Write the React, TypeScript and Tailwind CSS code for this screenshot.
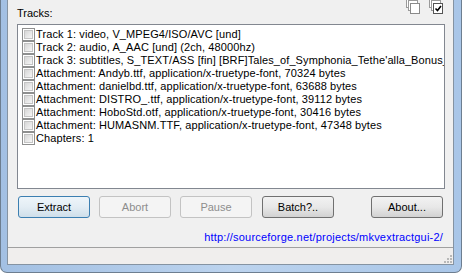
import React from "react";

const rows = [
  "Track 1: video, V_MPEG4/ISO/AVC [und]",
  "Track 2: audio, A_AAC [und]  (2ch, 48000hz)",
  "Track 3: subtitles, S_TEXT/ASS [fin] [BRF]Tales_of_Symphonia_Tethe'alla_Bonus_-_01_[720p][FIN].ass",
  "Attachment: Andyb.ttf, application/x-truetype-font, 70324 bytes",
  "Attachment: danielbd.ttf, application/x-truetype-font, 63688 bytes",
  "Attachment: DISTRO_.ttf, application/x-truetype-font, 39112 bytes",
  "Attachment: HoboStd.otf, application/x-truetype-font, 30416 bytes",
  "Attachment: HUMASNM.TTF, application/x-truetype-font, 47348 bytes",
  "Chapters: 1",
];

function StackIcon({ checked }: { checked?: boolean }) {
  return (
    <svg width="15" height="16" viewBox="0 0 15 16">
      <rect x="0.5" y="-2.5" width="9" height="10" fill="#fff" stroke="#9a9a9a" />
      <rect x="2.5" y="0.5" width="9" height="10" fill="#fff" stroke="#9a9a9a" />
      <rect
        x="4.5"
        y="3.5"
        width="9"
        height="10"
        fill="#fff"
        stroke={checked ? "#555" : "#8a8a8a"}
      />
      {checked && (
        <path d="M6.5 8.5 L8.5 10.5 L12 6" fill="none" stroke="#000" strokeWidth="1.6" />
      )}
    </svg>
  );
}

function Check() {
  return (
    <span className="flex h-[13px] w-[13px] shrink-0 items-center justify-center border border-[#8e8f8f] bg-white">
      <span className="h-[9px] w-[9px] border border-[#c4c4c4] bg-gradient-to-br from-[#d6d6d6] to-[#f6f6f6]" />
    </span>
  );
}

function Btn({
  label,
  kind,
  className = "",
}: {
  label: string;
  kind: "default" | "normal" | "disabled";
  className?: string;
}) {
  const styles = {
    default:
      "border-[#3c7fb1] bg-gradient-to-b from-[#eef5fa] via-[#e3edf4] to-[#cfdfea] text-black",
    normal:
      "border-[#707070] bg-gradient-to-b from-[#f2f2f2] via-[#e8e8e8] to-[#d2d2d2] text-black",
    disabled: "border-[#c3c3c3] bg-[#f4f4f4] text-[#8d8d8d]",
  }[kind];
  return (
    <div
      className={`flex h-[22px] w-[72px] items-center justify-center rounded-[3px] border ${styles} ${className}`}
    >
      {label}
    </div>
  );
}

export default function App() {
  return (
    <div className="h-[273px] w-[462px] overflow-hidden bg-white font-['Liberation_Sans',sans-serif] text-[11px] text-black">
      <div className="flex h-full flex-col rounded-b-[7px] border-b border-l border-r border-[#6d7e90] bg-gradient-to-r from-[#a3c0e3] via-[#bcd3ee] to-[#a9c6e8] pb-[7px] pl-[6px] pr-[7px]">
        <div className="flex flex-1 flex-col border-b border-l border-r border-[#8593a2] bg-[#f0f0f0]">
          <div className="relative flex h-[24px] items-center pl-[9px] pt-[2px]">
            <span>Tracks:</span>
            <div className="absolute right-[9px] top-0 flex gap-[8px]">
              <StackIcon />
              <StackIcon checked />
            </div>
          </div>

          <div className="ml-[9px] mr-[8px] h-[165px] overflow-hidden border border-[#828790] bg-white pl-[4px] pt-[3px]">
            {rows.map((r) => (
              <div key={r} className="flex h-[13px] items-center gap-[1px] whitespace-nowrap">
                <Check />
                <span className="leading-[13px] tracking-[0.1px]">{r}</span>
              </div>
            ))}
          </div>

          <div className="ml-[10px] mt-[7px] flex">
            <Btn label="Extract" kind="default" />
            <Btn label="Abort" kind="disabled" className="ml-[9px]" />
            <Btn label="Pause" kind="disabled" className="ml-[9px]" />
            <Btn label="Batch?.." kind="normal" className="ml-[10px]" />
            <Btn label="About..." kind="normal" className="ml-[37px]" />
          </div>

          <div className="mr-[10px] mt-[13px] text-right leading-[12px] tracking-[0.2px] text-[#0000ff]">
            http://sourceforge.net/projects/mkvextractgui-2/
          </div>

          <div className="mt-[4px] flex flex-1 items-end justify-end border-t border-[#a0a0a0] bg-[#f0eeed] pb-[1px] pr-[1px]">
            <svg width="10" height="10" viewBox="0 0 10 10">
              {[
                [8, 2],
                [5, 5],
                [8, 5],
                [2, 8],
                [5, 8],
                [8, 8],
              ].map(([x, y]) => (
                <rect key={`${x}-${y}`} x={x} y={y} width="2" height="2" fill="#b8b8b8" />
              ))}
            </svg>
          </div>
        </div>
      </div>
    </div>
  );
}
